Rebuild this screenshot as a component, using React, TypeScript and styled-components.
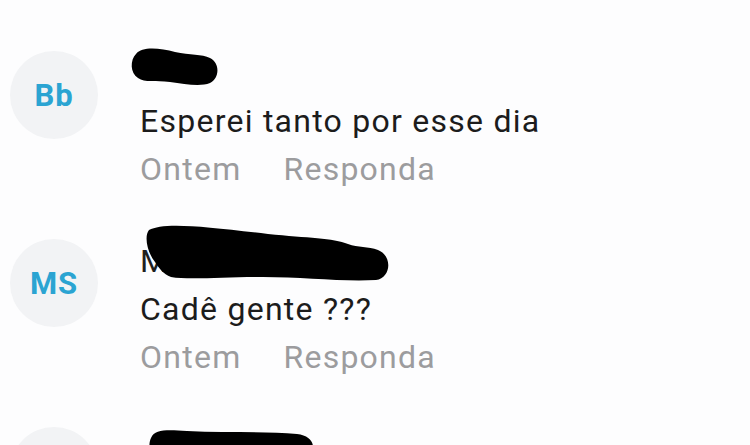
import React from "react";
import styled, { createGlobalStyle } from "styled-components";

const Global = createGlobalStyle`
  html, body { margin: 0; padding: 0; background: #fdfdfe; }
  body { font-family: Roboto, "Noto Sans", "Liberation Sans", sans-serif; overflow: hidden; }
`;

const List = styled.div`
  width: 750px;
  height: 445px;
  box-sizing: border-box;
  padding-top: 49px;
  display: flex;
  flex-direction: column;
  gap: 44px;
  overflow: hidden;
  background: #fdfdfe;
`;

const Row = styled.div`
  flex: none;
  display: flex;
  align-items: flex-start;
  padding-left: 10px;
  gap: 42px;
`;

const Avatar = styled.div`
  flex: none;
  width: 88px;
  height: 88px;
  margin-top: 2px;
  border-radius: 50%;
  background: #f2f3f5;
  display: flex;
  align-items: center;
  justify-content: center;
  color: #2ba4d2;
  font-weight: 700;
  font-size: 31px;
  letter-spacing: 1px;
`;

const Body = styled.div`
  display: flex;
  flex-direction: column;
  font-size: 32px;
  line-height: 48px;
  letter-spacing: 1.25px;
`;

const NameLine = styled.div`
  position: relative;
  height: 48px;
  color: #1f1f1f;
`;

const Redaction = styled.svg<{ $left: number; $top: number }>`
  position: absolute;
  left: ${(p) => p.$left}px;
  top: ${(p) => p.$top}px;
  overflow: visible;
`;

const Text = styled.div`
  color: #1c1c1c;
`;

const Meta = styled.div`
  display: flex;
  gap: 42px;
  color: #9c9c9e;
`;

type Item = {
  initials: string;
  name: string;
  text?: string;
  scribble: { left: number; top: number; w: number; h: number; d: string };
};

const items: Item[] = [
  {
    initials: "Bb",
    name: "",
    text: "Esperei tanto por esse dia",
    scribble: {
      left: -10,
      top: -3,
      w: 90,
      h: 42,
      d: "M6 8 C12 0 30 2 45 6 C60 9 72 8 80 12 C90 17 90 32 80 37 C70 41 55 38 40 36 C25 34 15 37 8 32 C0 27 0 14 6 8 Z",
    },
  },
  {
    initials: "MS",
    name: "M",
    text: "Cadê gente ???",
    scribble: {
      left: 3,
      top: -15,
      w: 250,
      h: 62,
      d: "M6 8 C20 0 60 4 125 12 C165 16 190 16 205 22 C215 26 225 24 235 28 C250 34 248 56 233 58 C200 60 160 55 120 55 C80 55 45 58 28 55 C20 52 16 46 12 40 C4 30 1 14 6 8 Z",
    },
  },
  {
    initials: "",
    name: "",
    scribble: {
      left: 7,
      top: 3,
      w: 170,
      h: 40,
      d: "M4 10 C8 1 20 2 40 3 C80 5 120 3 150 6 C168 8 170 22 160 30 C120 34 60 34 10 32 C2 28 1 16 4 10 Z",
    },
  },
];

export default function App() {
  return (
    <>
      <Global />
      <List>
        {items.map((it, i) => (
          <Row key={i}>
            <Avatar>{it.initials}</Avatar>
            <Body>
              <NameLine>
                {it.name}
                <Redaction
                  $left={it.scribble.left}
                  $top={it.scribble.top}
                  width={it.scribble.w}
                  height={it.scribble.h}
                  viewBox={`0 0 ${it.scribble.w} ${it.scribble.h}`}
                >
                  <path d={it.scribble.d} fill="#000" />
                </Redaction>
              </NameLine>
              {it.text && (
                <>
                  <Text>{it.text}</Text>
                  <Meta>
                    <span>Ontem</span>
                    <span>Responda</span>
                  </Meta>
                </>
              )}
            </Body>
          </Row>
        ))}
      </List>
    </>
  );
}
